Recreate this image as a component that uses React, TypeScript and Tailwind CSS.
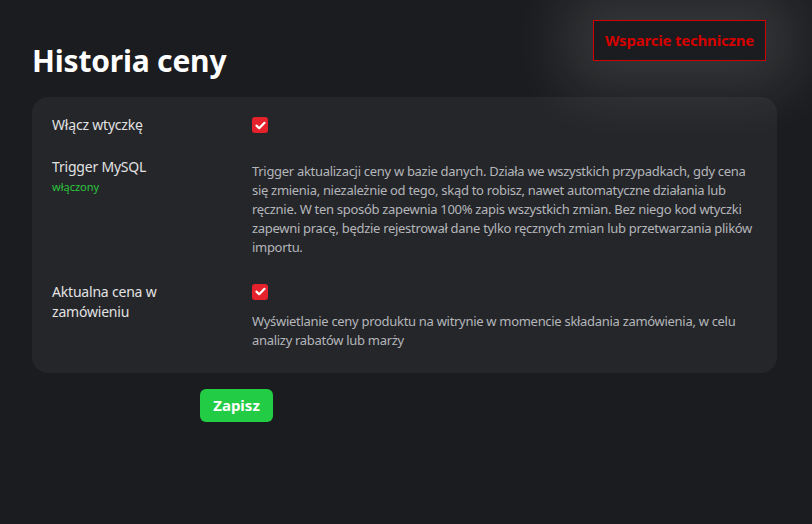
import React from "react"

const font = { fontFamily: '"Noto Sans", "Open Sans", sans-serif' }

function Check() {
  return (
    <span className="inline-flex w-4 h-4 rounded-[3px] bg-[#e5222b] items-center justify-center">
      <svg width="11" height="9" viewBox="0 0 11 9" fill="none">
        <path d="M1.5 4.6 L4.2 7.2 L9.5 1.8" stroke="#fff" strokeWidth="2.2" strokeLinecap="round" strokeLinejoin="round" />
      </svg>
    </span>
  )
}

export default function App() {
  return (
    <div className="min-h-[524px] bg-[#1b1c1f] px-8 pt-5 text-[#e2e2e2]" style={font}>
      <div className="flex justify-between items-start">
        <h1 className="mt-[21px] text-[30px] leading-[40px] font-bold text-white tracking-[-0.2px]">Historia ceny</h1>
        <button className="mr-[14px] h-[41px] px-[11px] border border-[#d00000] bg-[#1b1c1f] text-[#d40000] text-[15px] font-bold tracking-[-0.2px] shadow-[0_0_60px_28px_rgba(255,255,255,0.12)]">
          Wsparcie techniczne
        </button>
      </div>

      <div className="mt-[16px] mr-[3px] bg-[#25262a] rounded-2xl pl-5 pr-5 pt-[18px] pb-[23px]">
        <div className="flex items-center">
          <div className="w-[200px] text-[14px] leading-5 tracking-[-0.2px]">Włącz wtyczkę</div>
          <Check />
        </div>

        <div className="flex mt-[22px]">
          <div className="w-[200px] shrink-0">
            <div className="text-[14px] leading-5 tracking-[-0.2px]">Trigger MySQL</div>
            <div className="text-[11px] leading-5 text-[#2bc63e]">włączony</div>
          </div>
          <p className="mt-[5px] text-[13px] leading-[19px] text-[#b4b6ba] max-w-[505px] tracking-[-0.3px]">
            Trigger aktualizacji ceny w bazie danych. Działa we wszystkich przypadkach, gdy cena się zmienia, niezależnie od tego, skąd to robisz, nawet automatyczne działania lub ręcznie. W ten sposób zapewnia 100% zapis wszystkich zmian. Bez niego kod wtyczki zapewni pracę, będzie rejestrował dane tylko ręcznych zmian lub przetwarzania plików importu.
          </p>
        </div>

        <div className="flex mt-[21px]">
          <div className="w-[200px] shrink-0 mt-[4px] text-[14px] leading-5 pr-[50px] tracking-[-0.2px]">Aktualna cena w zamówieniu</div>
          <div>
            <Check />
            <p className="mt-[10px] text-[13px] leading-[19px] text-[#b4b6ba] max-w-[505px] tracking-[-0.3px]">
              Wyświetlanie ceny produktu na witrynie w momencie składania zamówienia, w celu analizy rabatów lub marży
            </p>
          </div>
        </div>
      </div>

      <button className="mt-[16px] ml-[168px] h-[33px] w-[73px] rounded-md bg-[#22cc44] text-white text-[15px] font-bold">
        Zapisz
      </button>
    </div>
  )
}
